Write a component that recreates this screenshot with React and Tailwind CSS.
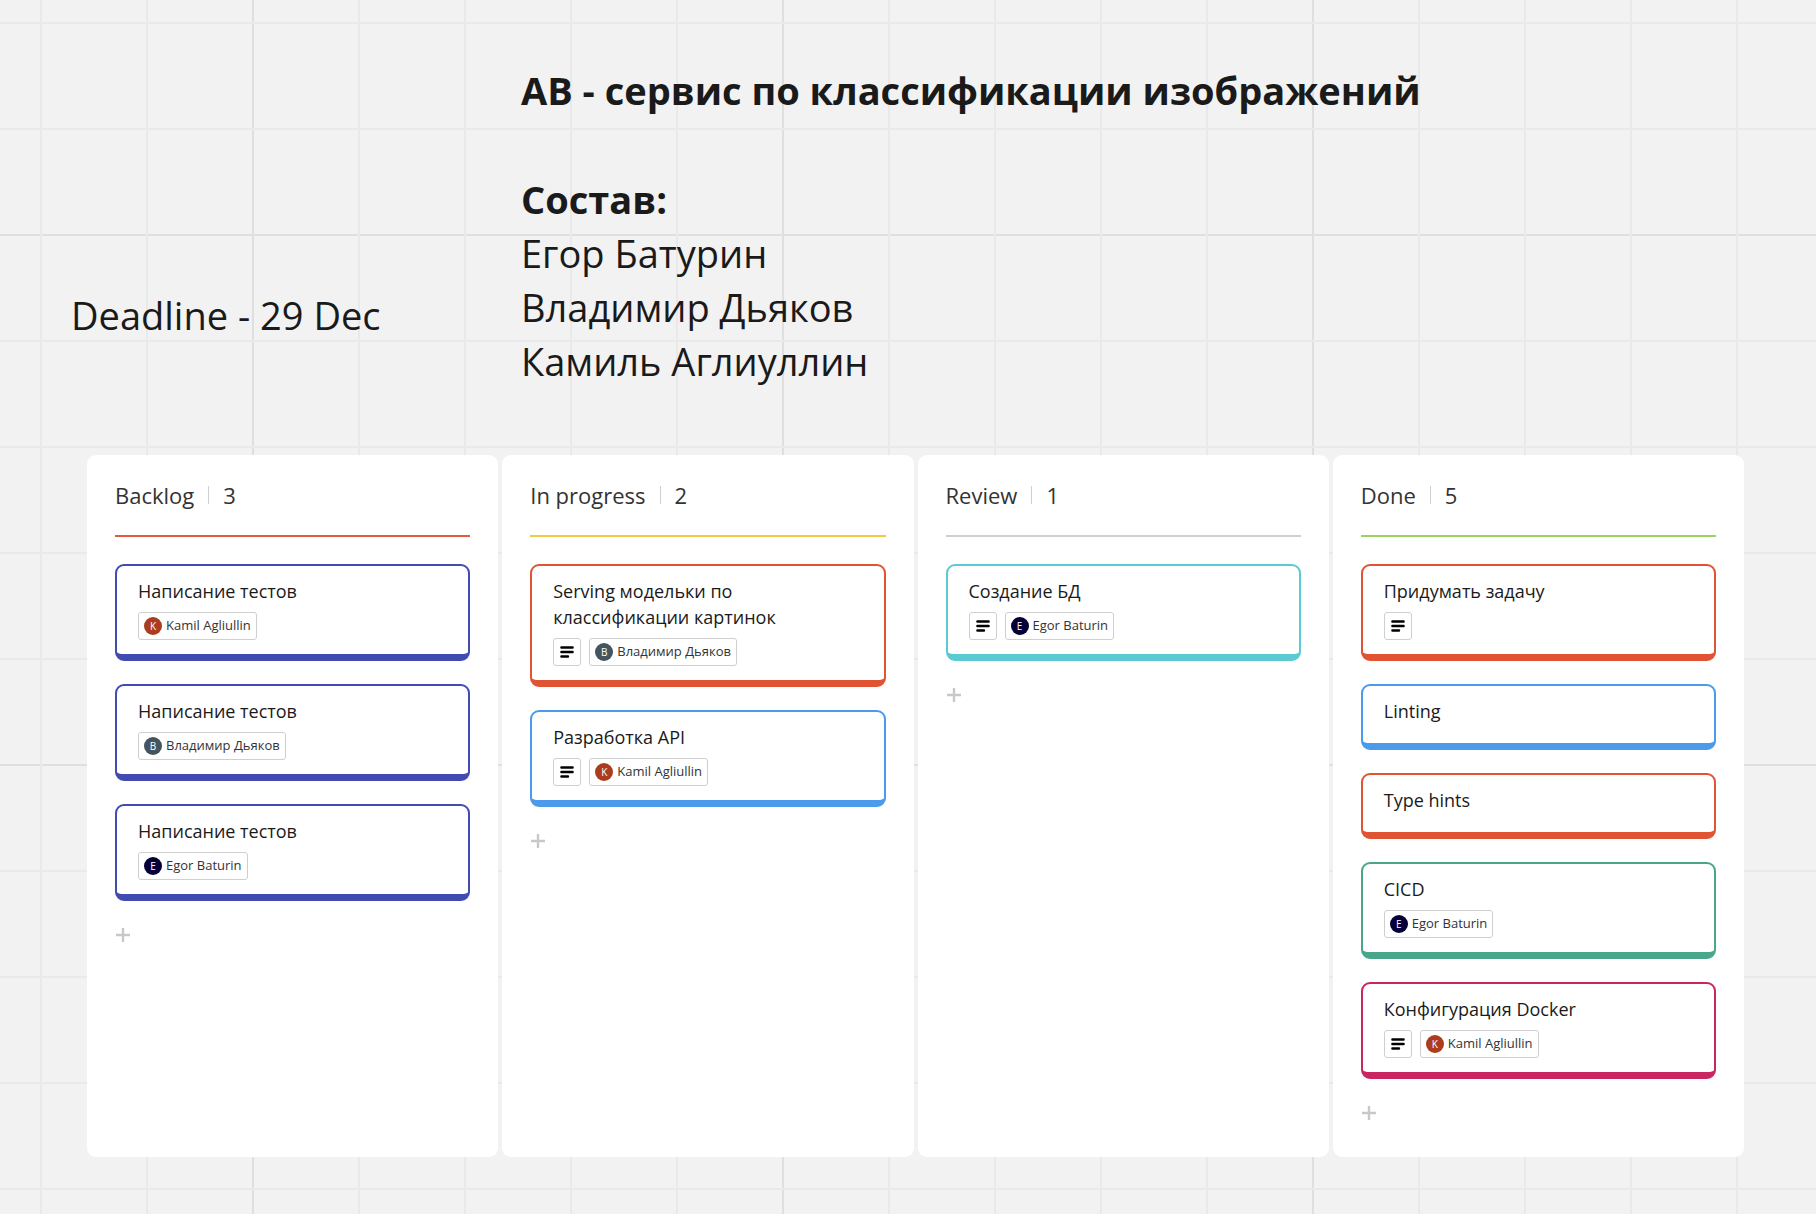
import React from "react";

const PEOPLE = {
  kamil: { name: "Kamil Agliullin", letter: "K", color: "bg-[#ab3d1e]" },
  vladimir: { name: "Владимир Дьяков", letter: "В", color: "bg-[#455560]" },
  egor: { name: "Egor Baturin", letter: "E", color: "bg-[#050038]" },
};

const COLUMNS = [
  {
    title: "Backlog",
    rule: "bg-[#e35b3d]",
    cards: [
      { title: "Написание тестов", border: "border-[#414bb2]", person: "kamil" },
      { title: "Написание тестов", border: "border-[#414bb2]", person: "vladimir" },
      { title: "Написание тестов", border: "border-[#414bb2]", person: "egor" },
    ],
  },
  {
    title: "In progress",
    rule: "bg-[#f2c744]",
    cards: [
      { title: "Serving модельки по классификации картинок", border: "border-[#e05434]", notes: true, person: "vladimir" },
      { title: "Разработка API", border: "border-[#4c9aec]", notes: true, person: "kamil" },
    ],
  },
  {
    title: "Review",
    rule: "bg-[#cfcfcf]",
    cards: [{ title: "Создание БД", border: "border-[#5ccad3]", notes: true, person: "egor" }],
  },
  {
    title: "Done",
    rule: "bg-[#9bd15f]",
    cards: [
      { title: "Придумать задачу", border: "border-[#e05434]", notes: true },
      { title: "Linting", border: "border-[#4c9aec]" },
      { title: "Type hints", border: "border-[#e05434]" },
      { title: "CICD", border: "border-[#4aa68a]", person: "egor" },
      { title: "Конфигурация Docker", border: "border-[#c92661]", notes: true, person: "kamil" },
    ],
  },
];

function CanvasGrid() {
  return (
    <svg className="absolute inset-0 -z-10 h-full w-full" aria-hidden="true">
      <defs>
        <pattern id="grid" x="252" y="234" width="530" height="530" patternUnits="userSpaceOnUse">
          <path d="M0 1H530M1 0V530" stroke="#dfdfdf" strokeWidth="2" />
          <path
            d="M107 0V530M213 0V530M319 0V530M425 0V530M0 107H530M0 213H530M0 319H530M0 425H530"
            stroke="#e9e9e9"
            strokeWidth="2"
          />
        </pattern>
      </defs>
      <rect width="100%" height="100%" fill="url(#grid)" />
    </svg>
  );
}

function NotesChip() {
  return (
    <span className="flex size-7 items-center justify-center rounded-[3px] border border-[#cfcfcf]">
      <svg width="14" height="12" viewBox="0 0 14 12" role="img" aria-label="Description">
        <path d="M1.4 1.5H12.6M1.4 6H12.6M1.4 10.5H8" stroke="#000" strokeWidth="2.4" strokeLinecap="round" />
      </svg>
    </span>
  );
}

function PersonChip({ person }) {
  const { name, letter, color } = PEOPLE[person];
  return (
    <span className="flex h-7 items-center gap-1 rounded-[3px] border border-[#cfcfcf] px-[5px] text-[13px] text-[#333]">
      <span className={`flex size-[18px] items-center justify-center rounded-full text-[10px] font-medium text-white ${color}`}>
        {letter}
      </span>
      {name}
    </span>
  );
}

function Card({ title, border, notes, person }) {
  return (
    <li className={`min-h-[66px] rounded-[9px] border-2 border-b-[7px] bg-white px-[21px] pt-3 pb-[14px] ${border}`}>
      <h3 className="max-w-[260px] text-[18px] leading-[26px] text-[#1a1a1a]">{title}</h3>
      {(notes || person) && (
        <div className="mt-2 flex gap-2">
          {notes && <NotesChip />}
          {person && <PersonChip person={person} />}
        </div>
      )}
    </li>
  );
}

function Column({ title, rule, cards }) {
  return (
    <section className="min-w-0 rounded-[9px] bg-white px-7 pt-[22px] pb-9">
      <div className="flex h-9 items-center gap-[14px] text-[22px] leading-9 text-[#333]">
        <h2>{title}</h2>
        <span className="h-[18px] w-px bg-[#cfcfcf]" />
        <span>{cards.length}</span>
      </div>
      <div className={`mt-[22px] h-[2px] ${rule}`} />
      <ul className="mt-[27px] flex flex-col gap-[23px]">
        {cards.map((card, i) => (
          <Card key={i} {...card} />
        ))}
      </ul>
      <button type="button" aria-label="Add card" className="mt-[26px] block cursor-pointer">
        <svg width="16" height="16" viewBox="0 0 16 16" aria-hidden="true">
          <path d="M8 1V15M1 8H15" stroke="#c8c8c8" strokeWidth="2.4" />
        </svg>
      </button>
    </section>
  );
}

export default function App() {
  return (
    <main className="relative isolate min-h-screen bg-[#f2f2f2] pt-[63px] pr-[72px] pb-14 font-['Open_Sans',sans-serif] text-[#1a1a1a]">
      <CanvasGrid />
      <header className="grid grid-cols-[450px_1fr] pl-[71px] text-[38px] leading-[54px]">
        <p className="self-end pb-[46px]">Deadline - 29 Dec</p>
        <div>
          <h1 className="font-bold">АВ - сервис по классификации изображений</h1>
          <h2 className="mt-[55px] font-bold">Состав:</h2>
          <ul>
            <li>Егор Батурин</li>
            <li>Владимир Дьяков</li>
            <li>Камиль Аглиуллин</li>
          </ul>
        </div>
      </header>
      <div className="mt-[67px] ml-[87px] grid grid-cols-4 gap-1">
        {COLUMNS.map((column) => (
          <Column key={column.title} {...column} />
        ))}
      </div>
    </main>
  );
}
